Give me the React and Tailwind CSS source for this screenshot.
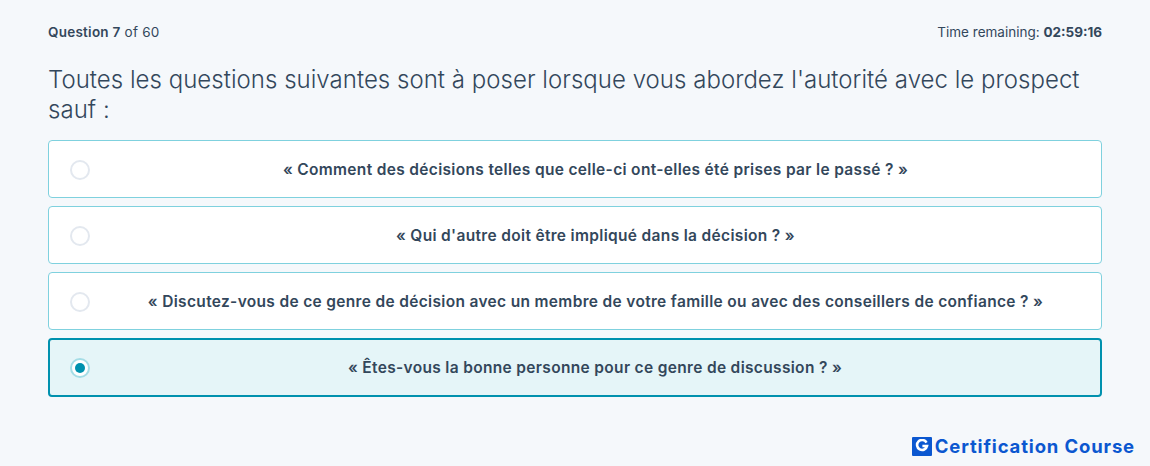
import React from 'react'

const options = [
  { text: '« Comment des décisions telles que celle-ci ont-elles été prises par le passé ? »' },
  { text: "« Qui d'autre doit être impliqué dans la décision ? »" },
  { text: '« Discutez-vous de ce genre de décision avec un membre de votre famille ou avec des conseillers de confiance ? »' },
  { text: '« Êtes-vous la bonne personne pour ce genre de discussion ? »', selected: true },
]

const Option = ({ text, selected }) => (
  <div
    className={
      selected
        ? 'flex items-center h-[59px] pt-px pl-5 rounded border-2 border-[#0091ae] bg-[#e5f5f8]'
        : 'flex items-center h-[58px] pt-[2px] pl-[21px] rounded border border-[#7fd1de] bg-white'
    }
  >
    {selected ? (
      <span className="flex items-center justify-center w-5 h-5 shrink-0 rounded-full border-2 border-[#a5dde6] bg-white">
        <span className="block w-[10px] h-[10px] rounded-full bg-[#0091ae]" />
      </span>
    ) : (
      <span className="block w-5 h-5 shrink-0 rounded-full border-2 border-[#e3e8ef] bg-white" />
    )}
    <p className="flex-1 text-center text-[15.5px] tracking-[0.33px] font-semibold text-[#33475b]">{text}</p>
  </div>
)

const App = () => {
  return (
    <div className="relative w-[1150px] h-[466px] overflow-hidden bg-[#f5f8fb] px-12 pt-[23px] font-['Inter',sans-serif] text-[#33475b]">
      <div className="flex items-center justify-between h-[18px] text-[13.5px]">
        <p className="tracking-[0.25px]">
          <span className="font-semibold">Question 7</span> of 60
        </p>
        <p>
          Time remaining: <span className="font-bold">02:59:16</span>
        </p>
      </div>

      <h1 className="mt-[24px] text-[24px] leading-[30px] font-light tracking-[0.03px]">
        Toutes les questions suivantes sont à poser lorsque vous abordez l'autorité avec le prospect sauf :
      </h1>

      <div className="mt-[15px] flex flex-col gap-2">
        {options.map((item, index) => (
          <Option key={index} text={item.text} selected={item.selected} />
        ))}
      </div>

      {/* logo */}
      <div className="absolute right-[15px] bottom-[10px] flex items-center gap-[3px]">
        <span className="flex items-center justify-center w-5 h-[19px] rounded-[1px] bg-[#0b57d0]">
          <svg width="14" height="14" viewBox="0 0 14 14" fill="none">
            <path d="M11.5 3.6A5 5 0 1 0 12 7H7.4" stroke="white" strokeWidth="2.6" />
          </svg>
        </span>
        <span className="text-[18.5px] leading-5 font-bold tracking-[0.85px] text-[#0b57d0]">Certification Course</span>
      </div>
    </div>
  )
}

export default App
